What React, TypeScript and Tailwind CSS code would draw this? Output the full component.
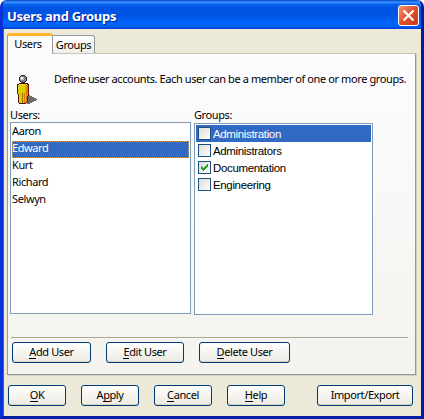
import React from "react";

function Check({ checked = false }: { checked?: boolean }) {
  return (
    <span className="flex h-[13px] w-[13px] shrink-0 items-center justify-center border border-[#1c5180] bg-linear-to-br from-[#dcdcd7] to-white">
      {checked && (
        <svg width="7" height="7" viewBox="0 0 7 7" shapeRendering="crispEdges" fill="#21a121">
          <path d="M0 2h1v3H0zM1 3h1v3H1zM2 4h1v3H2zM3 3h1v3H3zM4 2h1v3H4zM5 1h1v3H5zM6 0h1v3H6z" />
        </svg>
      )}
    </span>
  );
}

function Button({ k, pre = "", children, className }: { k?: string; pre?: string; children: React.ReactNode; className: string }) {
  return (
    <button
      className={`h-[21px] shrink-0 rounded-[3px] border border-[#003c74] bg-linear-to-b from-white via-[#f5f4ef] to-[#eceae2] pb-[2px] text-center leading-[16px] whitespace-nowrap shadow-[inset_0_-1px_0_#d8d3c5] ${className}`}
    >
      {pre}
      {k && <span className="inline-block h-[15px] border-b border-black leading-[16px]">{k}</span>}
      {children}
    </button>
  );
}

function Person() {
  return (
    <svg className="shrink-0" width="24" height="32" viewBox="0 0 24 32" shapeRendering="crispEdges">
      <path d="M12 21h2v1h2v1h2v1h2v1h1v1h-1v1h-2v1h-2v1h-2v1h-3z" fill="#6c6c6c" />
      <path d="M3 9h9v1h1v12h-1v6h-1v1h-1v1H3v-1H2v-9H1V10h2z" fill="#5a1400" />
      <path d="M2 11h1v-1h8v1h1v11h-1v6h-1v1H3V20H2z" fill="#d8d000" />
      <path d="M3 10h6v1H8v1H2v-1h1z" fill="#f5c81e" />
      <path d="M9 11h3v11h-1v6h-1v1H8V19h1z" fill="#e88000" />
      <path d="M9 11h1v17H9z" fill="#f2a800" />
      <path d="M6 19h1v10H6z" fill="#8a7000" />
      <path d="M5 1h4v1h1v1h1v4h-1v1H9v1H5V8H4V7H3V3h1V2h1z" fill="#2c2028" />
      <path d="M5 2h4v1h1v4H9v1H5V7H4V3h1z" fill="#808084" />
      <path d="M4 3h4v3H4z" fill="#b8b8bc" />
      <path d="M5 3h2v2H5z" fill="#fff" />
    </svg>
  );
}

const users = ["Aaron", "Edward", "Kurt", "Richard", "Selwyn"];
const groups = ["Administration", "Administrators", "Documentation", "Engineering"];

export default function App() {
  return (
    <div className="h-[419px] w-[424px] overflow-hidden bg-white font-['Noto_Sans',sans-serif] text-[11px] tracking-[-0.4px] text-black">
      <div className="flex h-full flex-col overflow-hidden rounded-t-[7px] border-x-[3px] border-b-[3px] border-l-[#0831d9] border-r-[#001da0] border-b-[#001da0] bg-[#ece9d8] shadow-[inset_1px_0_0_#166aee]">
        <header className="-mx-[3px] flex h-[29px] shrink-0 items-center justify-between bg-[linear-gradient(180deg,#0046c8_0%,#3d95ff_8%,#0a63ee_14%,#0054e3_28%,#0054e3_55%,#0066ff_78%,#0062f6_90%,#003dd7_100%)] pr-[5px] pl-[7px]">
          <h1 className="mt-[3px] font-['Noto_Sans',sans-serif] text-[13px] leading-[20px] font-bold tracking-[-0.3px] text-white [text-shadow:1px_1px_0_#0a1883]">
            Users and Groups
          </h1>
          <button className="mt-[2px] flex h-[21px] w-[21px] items-center justify-center rounded-[3px] border border-white bg-linear-to-br from-[#ee9070] via-[#e2512c] to-[#c63a10]">
            <svg width="11" height="11" viewBox="0 0 11 11" stroke="#fff" strokeWidth="2.2">
              <path d="M0.5 0.5l10 10M10.5 0.5l-10 10" />
            </svg>
          </button>
        </header>
        <nav className="flex h-[24px] shrink-0 items-end pl-[4px]">
          <div className="z-10 -mb-px h-[21px] w-[46px] rounded-t-[3px] border-x border-t-[3px] border-x-[#919b9c] border-t-[#ffb62c] bg-[#fcfcfe] pr-[4px] text-center leading-[15px]">
            Users
          </div>
          <div className="h-[18px] w-[42px] rounded-tr-[3px] border-t border-r border-[#919b9c] bg-linear-to-b from-white to-[#f0efe8] text-center leading-[18px]">
            Groups
          </div>
        </nav>
        <main className="ml-[4px] flex h-[322px] w-[409px] shrink-0 flex-col border border-[#919b9c] border-t-[#c5c6b8] bg-linear-to-b from-[#fcfcfe] to-[#f4f3ee] shadow-[1px_1px_0_#d0cebf] pl-[2px]">
          <div className="flex h-[55px] shrink-0 pt-[20px] pl-[6px]">
            <Person />
            <p className="-mt-[3px] ml-[14px] leading-[16px] whitespace-nowrap">
              Define user accounts. Each user can be a member of one or more groups.
            </p>
          </div>
          <div className="flex h-[228px] shrink-0 gap-[3px]">
            <section className="w-[181px]">
              <div className="h-[13px] leading-[11px]">Users:</div>
              <ul className="h-[192px] border border-[#7f9db9] bg-white p-px">
                {users.map((u) => (
                  <li
                    key={u}
                    className={`h-[17px] leading-[14px] ${u === "Edward" ? "bg-[#316ac5] text-white outline-1 -outline-offset-1 outline-dotted outline-[#e0a84e]" : ""}`}
                  >
                    {u}
                  </li>
                ))}
              </ul>
            </section>
            <section className="w-[179px]">
              <div className="h-[14px] leading-[11px]">Groups:</div>
              <ul className="h-[192px] border border-[#7f9db9] bg-white p-px font-['Liberation_Sans',sans-serif] tracking-[-0.15px]">
                {groups.map((g) => (
                  <li key={g} className={`flex h-[17px] items-center gap-[2px] pl-[2px] ${g === "Administration" ? "bg-[#316ac5] text-white" : ""}`}>
                    <Check checked={g === "Documentation"} />
                    <span className="mt-[2px] text-[11.5px] leading-[15px] tracking-[-0.35px]">{g}</span>
                  </li>
                ))}
              </ul>
            </section>
          </div>
          <div className="ml-px h-px w-[397px] shrink-0 bg-[#aca899]" />
          <div className="mt-[4px] ml-[2px] flex">
            <Button k="A" className="w-[79px]">dd User</Button>
            <Button k="E" className="ml-[15px] w-[78px]">dit User</Button>
            <Button k="D" className="ml-[15px] w-[91px]">elete User</Button>
          </div>
        </main>
        <footer className="mt-[10px] flex pl-[5px]">
          <Button k="O" className="w-[58px]">K</Button>
          <Button pre="A" k="p" className="ml-[15px] w-[58px]">ply</Button>
          <Button k="C" className="ml-[15px] w-[58px]">ancel</Button>
          <Button k="H" className="ml-[15px] w-[58px]">elp</Button>
          <Button className="ml-[32px] w-[96px]">Import/Export</Button>
        </footer>
      </div>
    </div>
  );
}
